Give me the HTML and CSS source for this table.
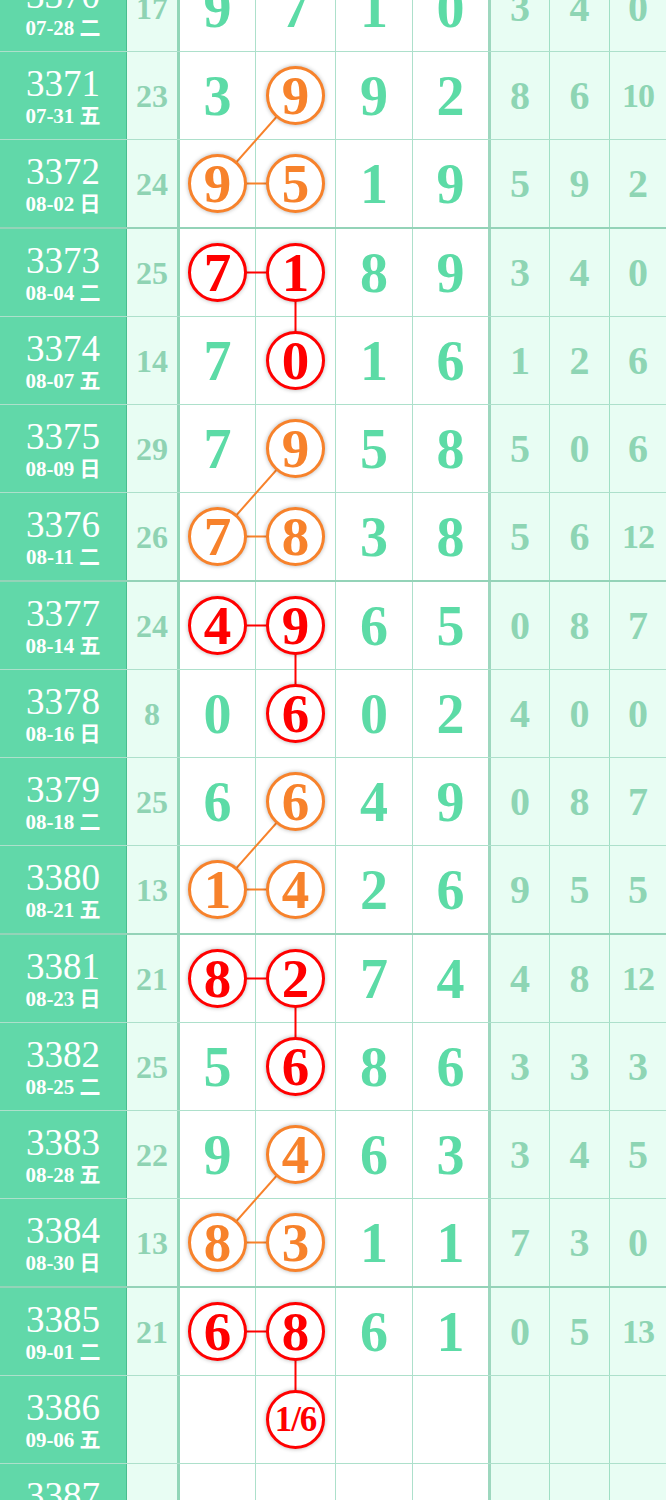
FILE: index.html
```html
<!DOCTYPE html>
<html lang="zh">
<head>
    <meta charset="UTF-8">
    <meta name="viewport" content="width=device-width, initial-scale=1.0">
    <title>走势图</title>
    <link rel="stylesheet" href="styles.css">
</head>
<body>

    <div class="chart">
        <!-- lignes de liaison entre les boules -->
        <svg class="links" width="666" height="1540" viewBox="0 0 666 1540">
            <g stroke="#f7822b" stroke-width="2">
                <line x1="295.5" y1="131.5" x2="217.5" y2="219.5"/>
                <line x1="217.5" y1="219.5" x2="295.5" y2="219.5"/>
                <line x1="295.5" y1="484.5" x2="217.5" y2="572.5"/>
                <line x1="217.5" y1="572.5" x2="295.5" y2="572.5"/>
                <line x1="295.5" y1="837.5" x2="217.5" y2="925.5"/>
                <line x1="217.5" y1="925.5" x2="295.5" y2="925.5"/>
                <line x1="295.5" y1="1190.5" x2="217.5" y2="1278.5"/>
                <line x1="217.5" y1="1278.5" x2="295.5" y2="1278.5"/>
            </g>
            <g stroke="#ff0000" stroke-width="2">
                <line x1="217.5" y1="308.5" x2="295.5" y2="308.5"/>
                <line x1="295.5" y1="308.5" x2="295.5" y2="396.5"/>
                <line x1="217.5" y1="661.5" x2="295.5" y2="661.5"/>
                <line x1="295.5" y1="661.5" x2="295.5" y2="749.5"/>
                <line x1="217.5" y1="1014.5" x2="295.5" y2="1014.5"/>
                <line x1="295.5" y1="1014.5" x2="295.5" y2="1102.5"/>
                <line x1="217.5" y1="1367.5" x2="295.5" y2="1367.5"/>
                <line x1="295.5" y1="1367.5" x2="295.5" y2="1455.5"/>
            </g>
        </svg>

        <div class="row">
            <div class="c issue"><span class="no">3370</span><span class="date">07-28 二</span></div>
            <div class="c sum">17</div>
            <div class="c d">9</div><div class="c d">7</div><div class="c d">1</div><div class="c d sep">0</div>
            <div class="c m">3</div><div class="c m">4</div><div class="c m">0</div>
        </div>
        <div class="row">
            <div class="c issue"><span class="no">3371</span><span class="date">07-31 五</span></div>
            <div class="c sum">23</div>
            <div class="c d">3</div><div class="c d"><b class="ball or">9</b></div><div class="c d">9</div><div class="c d sep">2</div>
            <div class="c m">8</div><div class="c m">6</div><div class="c m two">10</div>
        </div>
        <div class="row thick">
            <div class="c issue"><span class="no">3372</span><span class="date">08-02 日</span></div>
            <div class="c sum">24</div>
            <div class="c d"><b class="ball or">9</b></div><div class="c d"><b class="ball or">5</b></div><div class="c d">1</div><div class="c d sep">9</div>
            <div class="c m">5</div><div class="c m">9</div><div class="c m">2</div>
        </div>
        <div class="row">
            <div class="c issue"><span class="no">3373</span><span class="date">08-04 二</span></div>
            <div class="c sum">25</div>
            <div class="c d"><b class="ball red">7</b></div><div class="c d"><b class="ball red">1</b></div><div class="c d">8</div><div class="c d sep">9</div>
            <div class="c m">3</div><div class="c m">4</div><div class="c m">0</div>
        </div>
        <div class="row">
            <div class="c issue"><span class="no">3374</span><span class="date">08-07 五</span></div>
            <div class="c sum">14</div>
            <div class="c d">7</div><div class="c d"><b class="ball red">0</b></div><div class="c d">1</div><div class="c d sep">6</div>
            <div class="c m">1</div><div class="c m">2</div><div class="c m">6</div>
        </div>
        <div class="row">
            <div class="c issue"><span class="no">3375</span><span class="date">08-09 日</span></div>
            <div class="c sum">29</div>
            <div class="c d">7</div><div class="c d"><b class="ball or">9</b></div><div class="c d">5</div><div class="c d sep">8</div>
            <div class="c m">5</div><div class="c m">0</div><div class="c m">6</div>
        </div>
        <div class="row thick">
            <div class="c issue"><span class="no">3376</span><span class="date">08-11 二</span></div>
            <div class="c sum">26</div>
            <div class="c d"><b class="ball or">7</b></div><div class="c d"><b class="ball or">8</b></div><div class="c d">3</div><div class="c d sep">8</div>
            <div class="c m">5</div><div class="c m">6</div><div class="c m two">12</div>
        </div>
        <div class="row">
            <div class="c issue"><span class="no">3377</span><span class="date">08-14 五</span></div>
            <div class="c sum">24</div>
            <div class="c d"><b class="ball red">4</b></div><div class="c d"><b class="ball red">9</b></div><div class="c d">6</div><div class="c d sep">5</div>
            <div class="c m">0</div><div class="c m">8</div><div class="c m">7</div>
        </div>
        <div class="row">
            <div class="c issue"><span class="no">3378</span><span class="date">08-16 日</span></div>
            <div class="c sum">8</div>
            <div class="c d">0</div><div class="c d"><b class="ball red">6</b></div><div class="c d">0</div><div class="c d sep">2</div>
            <div class="c m">4</div><div class="c m">0</div><div class="c m">0</div>
        </div>
        <div class="row">
            <div class="c issue"><span class="no">3379</span><span class="date">08-18 二</span></div>
            <div class="c sum">25</div>
            <div class="c d">6</div><div class="c d"><b class="ball or">6</b></div><div class="c d">4</div><div class="c d sep">9</div>
            <div class="c m">0</div><div class="c m">8</div><div class="c m">7</div>
        </div>
        <div class="row thick">
            <div class="c issue"><span class="no">3380</span><span class="date">08-21 五</span></div>
            <div class="c sum">13</div>
            <div class="c d"><b class="ball or">1</b></div><div class="c d"><b class="ball or">4</b></div><div class="c d">2</div><div class="c d sep">6</div>
            <div class="c m">9</div><div class="c m">5</div><div class="c m">5</div>
        </div>
        <div class="row">
            <div class="c issue"><span class="no">3381</span><span class="date">08-23 日</span></div>
            <div class="c sum">21</div>
            <div class="c d"><b class="ball red">8</b></div><div class="c d"><b class="ball red">2</b></div><div class="c d">7</div><div class="c d sep">4</div>
            <div class="c m">4</div><div class="c m">8</div><div class="c m two">12</div>
        </div>
        <div class="row">
            <div class="c issue"><span class="no">3382</span><span class="date">08-25 二</span></div>
            <div class="c sum">25</div>
            <div class="c d">5</div><div class="c d"><b class="ball red">6</b></div><div class="c d">8</div><div class="c d sep">6</div>
            <div class="c m">3</div><div class="c m">3</div><div class="c m">3</div>
        </div>
        <div class="row">
            <div class="c issue"><span class="no">3383</span><span class="date">08-28 五</span></div>
            <div class="c sum">22</div>
            <div class="c d">9</div><div class="c d"><b class="ball or">4</b></div><div class="c d">6</div><div class="c d sep">3</div>
            <div class="c m">3</div><div class="c m">4</div><div class="c m">5</div>
        </div>
        <div class="row thick">
            <div class="c issue"><span class="no">3384</span><span class="date">08-30 日</span></div>
            <div class="c sum">13</div>
            <div class="c d"><b class="ball or">8</b></div><div class="c d"><b class="ball or">3</b></div><div class="c d">1</div><div class="c d sep">1</div>
            <div class="c m">7</div><div class="c m">3</div><div class="c m">0</div>
        </div>
        <div class="row">
            <div class="c issue"><span class="no">3385</span><span class="date">09-01 二</span></div>
            <div class="c sum">21</div>
            <div class="c d"><b class="ball red">6</b></div><div class="c d"><b class="ball red">8</b></div><div class="c d">6</div><div class="c d sep">1</div>
            <div class="c m">0</div><div class="c m">5</div><div class="c m two">13</div>
        </div>
        <div class="row">
            <div class="c issue"><span class="no">3386</span><span class="date">09-06 五</span></div>
            <div class="c sum"></div>
            <div class="c d"></div><div class="c d"><b class="ball red small">1/6</b></div><div class="c d"></div><div class="c d sep"></div>
            <div class="c m"></div><div class="c m"></div><div class="c m"></div>
        </div>
        <div class="row">
            <div class="c issue"><span class="no">3387</span><span class="date">09-08 日</span></div>
            <div class="c sum"></div>
            <div class="c d"></div><div class="c d"></div><div class="c d"></div><div class="c d sep"></div>
            <div class="c m"></div><div class="c m"></div><div class="c m"></div>
        </div>
    </div>

</body>
</html>
```

FILE: styles.css
```css
/* page */
body {
    margin: 0;
    padding: 0;
    background: #ffffff;
    font-family: "Liberation Serif", "Noto Sans CJK SC", serif;
    overflow: hidden;
}

/* tableau du tirage, deja defile */
.chart {
    position: relative;
    width: 666px;
    margin-top: -36px;
}

.links {
    position: absolute;
    top: 0;
    left: 0;
    z-index: 1;
}

.row {
    display: grid;
    grid-template-columns: 127px 53px 76px 80px 77px 78px 59px 60px 56px;
    height: 88px;
    box-sizing: border-box;
    border-bottom: 1px solid rgba(60, 180, 130, 0.42);
}

    .row.thick {
        height: 89px;
        border-bottom: 2px solid rgba(60, 175, 125, 0.55);
    }

.c {
    display: flex;
    align-items: center;
    justify-content: center;
    box-sizing: border-box;
    border-right: 1px solid rgba(60, 180, 130, 0.42);
    font-weight: bold;
    line-height: 1;
}

/* colonne numero + date */
.issue {
    flex-direction: column;
    background: #61d8a9;
    color: #ffffff;
    font-weight: normal;
    border-right-color: rgba(40, 160, 110, 0.45);
    padding-top: 2px;
}

    .issue .no {
        font-size: 37px;
        line-height: 36px;
    }

    .issue .date {
        font-size: 21px;
        font-weight: bold;
        line-height: 22px;
        margin-top: 3px;
    }

.sum {
    background: #e8fdf3;
    color: #8fd3b3;
    font-size: 32px;
    border-right: 3px solid rgba(60, 175, 125, 0.5);
}

.d {
    background: #ffffff;
    color: #5cdba6;
    font-size: 56px;
}

    .d.sep {
        border-right: 3px solid rgba(60, 175, 125, 0.5);
    }

.m {
    background: #e8fdf3;
    color: #8ed5b4;
    font-size: 40px;
}

    .m.two {
        font-size: 34px;
        letter-spacing: -1px;
    }

    .m:last-child {
        border-right: none;
    }

/* boules */
.ball {
    position: relative;
    z-index: 2;
    display: flex;
    align-items: center;
    justify-content: center;
    width: 59px;
    height: 59px;
    box-sizing: border-box;
    border-radius: 50%;
    background: #ffffff;
    border: 3px solid;
    box-shadow: 0 0 4px rgba(0, 0, 0, 0.3);
    font-size: 55px;
}

    .ball.red {
        color: #ff0000;
        border-color: #ff0000;
    }

    .ball.or {
        color: #f7822b;
        border-color: #f7822b;
    }

    .ball.small {
        font-size: 35px;
        letter-spacing: -1px;
    }
```
